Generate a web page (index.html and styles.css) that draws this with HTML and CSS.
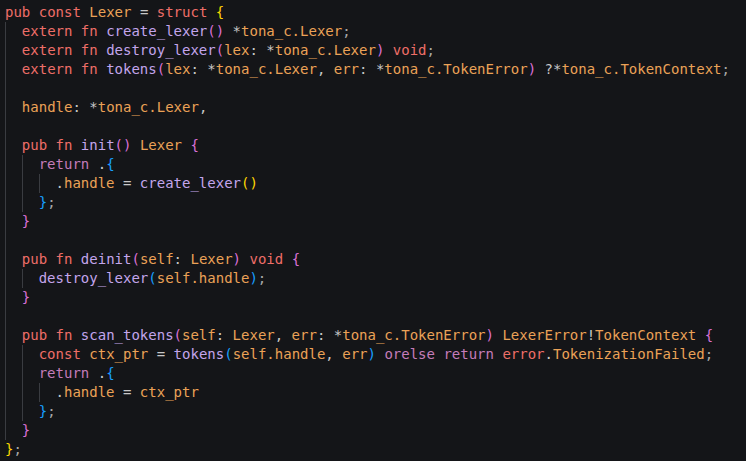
FILE: index.html
```html
<!DOCTYPE html>
<html>
<head>
<meta charset="utf-8">
<link rel="stylesheet" href="styles.css">
</head>
<body>
<div class="code">
<div class="ln"><span class="tx"><span class="k">pub const</span> <span class="t">Lexer</span> <span class="p">=</span> <span class="k">struct</span> <span class="y">{</span></span></div>
<div class="ln"><i class="g"></i><span class="tx"><span class="k">extern fn</span> <span class="f">create_lexer</span><span class="m">()</span> <span class="p">*</span><span class="t">tona_c.Lexer</span><span class="s">;</span></span></div>
<div class="ln"><i class="g"></i><span class="tx"><span class="k">extern fn</span> <span class="f">destroy_lexer</span><span class="m">(</span><span class="t">lex</span><span class="p">: *</span><span class="t">tona_c.Lexer</span><span class="m">)</span> <span class="k">void</span><span class="s">;</span></span></div>
<div class="ln"><i class="g"></i><span class="tx"><span class="k">extern fn</span> <span class="f">tokens</span><span class="m">(</span><span class="t">lex</span><span class="p">: *</span><span class="t">tona_c.Lexer</span><span class="p">, </span><span class="t">err</span><span class="p">: *</span><span class="t">tona_c.TokenError</span><span class="m">)</span> <span class="p">?*</span><span class="t">tona_c.TokenContext</span><span class="s">;</span></span></div>
<div class="ln"><i class="g"></i><span class="tx"></span></div>
<div class="ln"><i class="g"></i><span class="tx"><span class="t">handle</span><span class="p">: *</span><span class="t">tona_c.Lexer</span><span class="p">,</span></span></div>
<div class="ln"><i class="g"></i><span class="tx"></span></div>
<div class="ln"><i class="g"></i><span class="tx"><span class="k">pub fn</span> <span class="f">init</span><span class="m">()</span> <span class="t">Lexer</span> <span class="m">{</span></span></div>
<div class="ln"><i class="g"></i><i class="g"></i><span class="tx"><span class="r">return</span> <span class="p">.</span><span class="b">{</span></span></div>
<div class="ln"><i class="g"></i><i class="g"></i><i class="g"></i><span class="tx"><span class="p">.</span><span class="t">handle</span> <span class="p">=</span> <span class="f">create_lexer</span><span class="y">()</span></span></div>
<div class="ln"><i class="g"></i><i class="g"></i><span class="tx"><span class="b">}</span><span class="s">;</span></span></div>
<div class="ln"><i class="g"></i><span class="tx"><span class="m">}</span></span></div>
<div class="ln"><i class="g"></i><span class="tx"></span></div>
<div class="ln"><i class="g"></i><span class="tx"><span class="k">pub fn</span> <span class="f">deinit</span><span class="m">(</span><span class="t">self</span><span class="p">: </span><span class="t">Lexer</span><span class="m">)</span> <span class="k">void</span> <span class="m">{</span></span></div>
<div class="ln"><i class="g"></i><i class="g"></i><span class="tx"><span class="f">destroy_lexer</span><span class="b">(</span><span class="t">self.handle</span><span class="b">)</span><span class="s">;</span></span></div>
<div class="ln"><i class="g"></i><span class="tx"><span class="m">}</span></span></div>
<div class="ln"><i class="g"></i><span class="tx"></span></div>
<div class="ln"><i class="g"></i><span class="tx"><span class="k">pub fn</span> <span class="f">scan_tokens</span><span class="m">(</span><span class="t">self</span><span class="p">: </span><span class="t">Lexer</span><span class="p">, </span><span class="t">err</span><span class="p">: *</span><span class="t">tona_c.TokenError</span><span class="m">)</span> <span class="t">LexerError</span><span class="p">!</span><span class="t">TokenContext</span> <span class="m">{</span></span></div>
<div class="ln"><i class="g"></i><i class="g"></i><span class="tx"><span class="k">const</span> <span class="t">ctx_ptr</span> <span class="p">=</span> <span class="f">tokens</span><span class="b">(</span><span class="t">self.handle</span><span class="p">, </span><span class="t">err</span><span class="b">)</span> <span class="r">orelse return</span> <span class="k">error</span><span class="p">.</span><span class="t">TokenizationFailed</span><span class="s">;</span></span></div>
<div class="ln"><i class="g"></i><i class="g"></i><span class="tx"><span class="r">return</span> <span class="p">.</span><span class="b">{</span></span></div>
<div class="ln"><i class="g"></i><i class="g"></i><i class="g"></i><span class="tx"><span class="p">.</span><span class="t">handle</span> <span class="p">=</span> <span class="t">ctx_ptr</span></span></div>
<div class="ln"><i class="g"></i><i class="g"></i><span class="tx"><span class="b">}</span><span class="s">;</span></span></div>
<div class="ln"><i class="g"></i><span class="tx"><span class="m">}</span></span></div>
<div class="ln"><span class="tx"><span class="y">}</span><span class="s">;</span></span></div>
</div>
</body>
</html>
```

FILE: styles.css
```css
html, body {
  margin: 0;
  padding: 0;
  background: #141518;
}

.code {
  padding: 3px 0 0 5px;
  font-family: "DejaVu Sans Mono", "Liberation Mono", monospace;
  font-size: 14px;
  line-height: 19px;
  color: #c8c8c8;
}

.ln {
  display: flex;
  height: 19px;
  white-space: pre;
}

.g {
  flex: none;
  width: 2ch;
  box-sizing: border-box;
  border-left: 1px solid #3a3c41;
}

.tx {
  white-space: pre;
}

.k { color: #ee6e68; }
.f { color: #c3a5ec; }
.t { color: #eba257; }
.p { color: #c8c8c8; }
.s { color: #a8a8a8; }
.r { color: #c57cba; }
.y { color: #ffd700; }
.m { color: #da70d6; }
.b { color: #179fff; }
```
